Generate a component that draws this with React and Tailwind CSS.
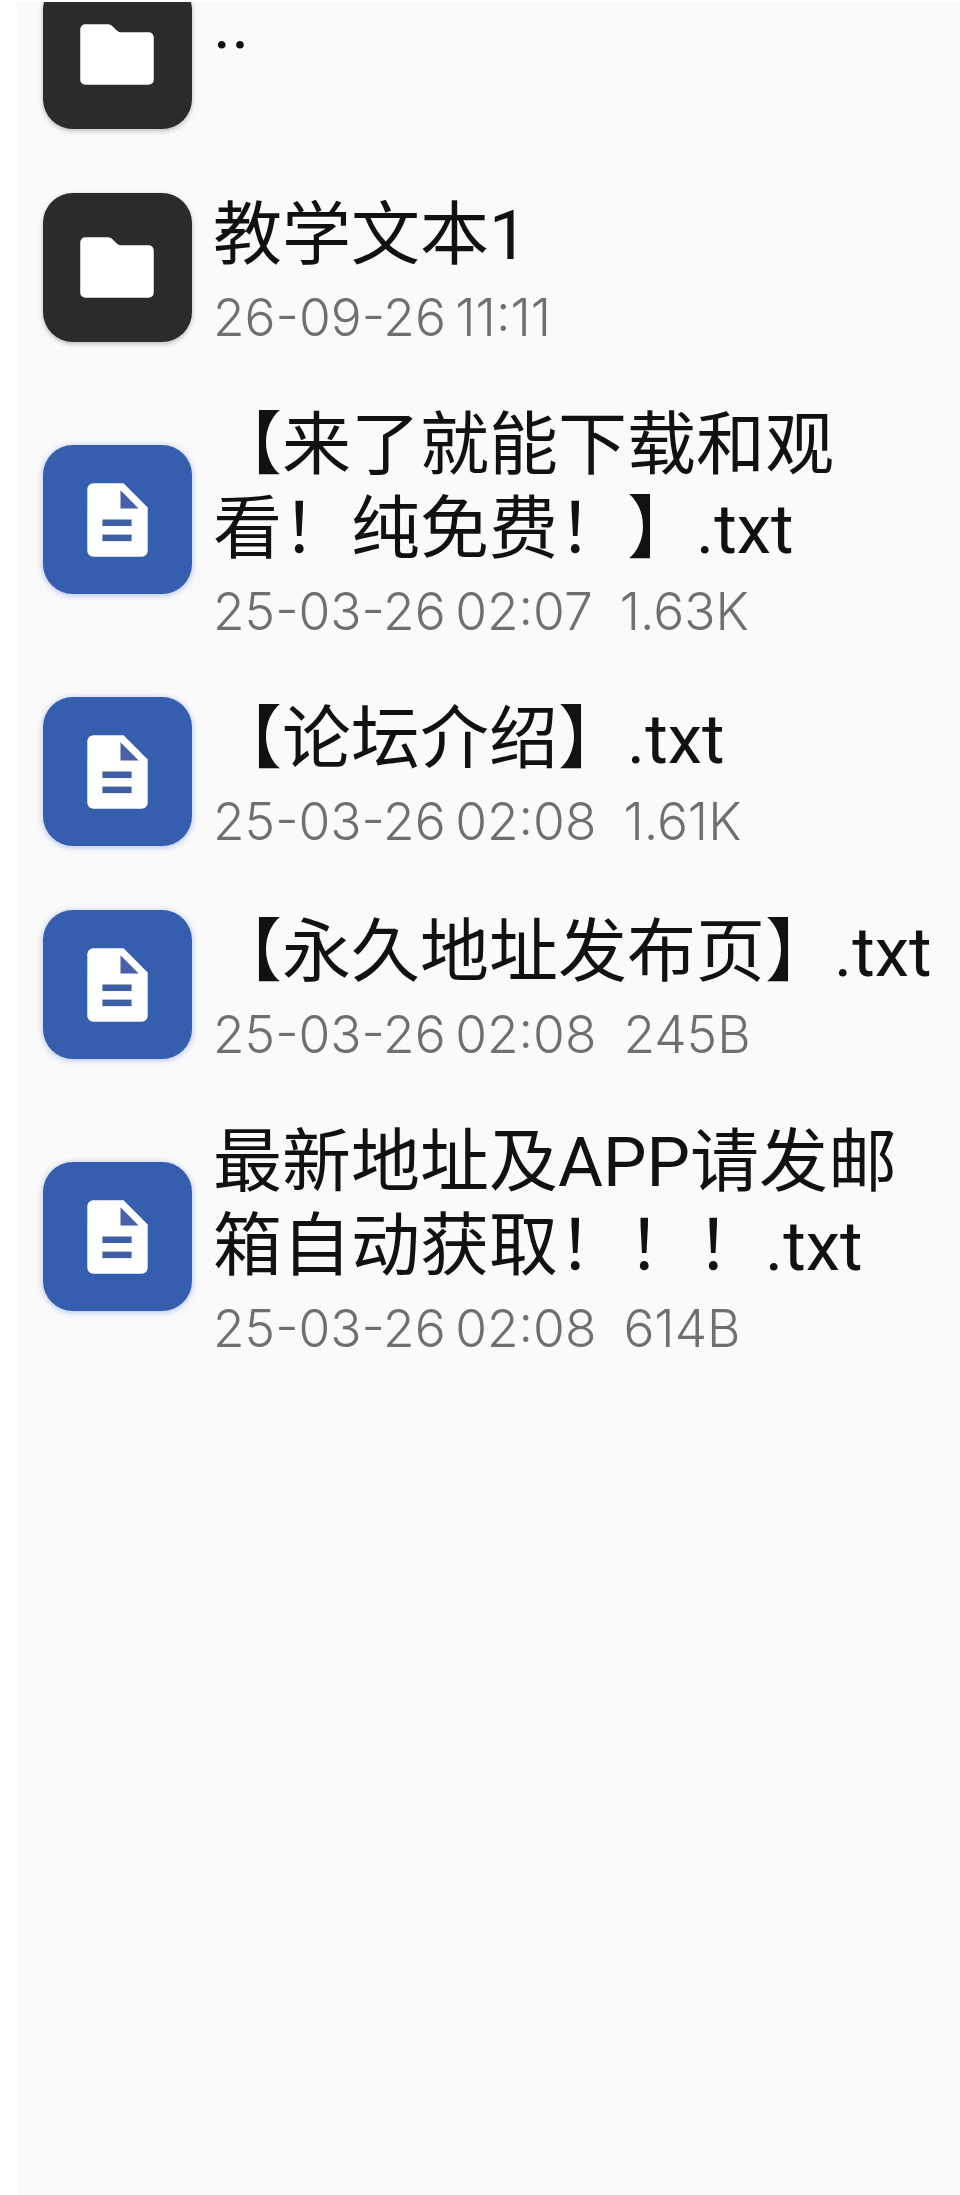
import React from 'react';

const rows = [
  { type: 'folder', name: '..', clip: true },
  { type: 'folder', name: '教学文本1', date: '26-09-26 11:11' },
  { type: 'file', name: '【来了就能下载和观看！纯免费！】.txt', date: '25-03-26 02:07', size: '1.63K', wrap: true },
  { type: 'file', name: '【论坛介绍】.txt', date: '25-03-26 02:08', size: '1.61K' },
  { type: 'file', name: '【永久地址发布页】.txt', date: '25-03-26 02:08', size: '245B' },
  { type: 'file', name: '最新地址及APP请发邮箱自动获取！！！.txt', date: '25-03-26 02:08', size: '614B', wrap: true },
];

function FolderIcon() {
  return (
    <div className="w-[149px] h-[149px] shrink-0 rounded-[30px] bg-[#2b2b2b] shadow-[0_2px_5px_rgba(0,0,0,0.25)]">
      <svg viewBox="0 0 148 148" className="w-full h-full">
        <path
          d="M42 44H65Q67 44 68.500 45.500L73 50Q75 52 77 52H105a5 5 0 0 1 5 5V99a5 5 0 0 1-5 5H42a5 5 0 0 1-5-5V49a5 5 0 0 1 5-5z"
          fill="#ffffff"
        />
      </svg>
    </div>
  );
}

function FileIcon() {
  return (
    <div className="w-[149px] h-[149px] shrink-0 rounded-[30px] bg-[#355fae] shadow-[0_1px_6px_rgba(70,110,220,0.45)]">
      <svg viewBox="0 0 148 148" className="w-full h-full">
        <path d="M50 38H80L104 62V105a6 6 0 0 1-6 6H50a6 6 0 0 1-6-6V44a6 6 0 0 1 6-6z" fill="#ffffff" />
        <path d="M77 45L95 63H77z" fill="#4760a8" />
        <rect x="59" y="74" width="29" height="6.500" fill="#3f5fa3" />
        <rect x="59" y="89" width="29" height="6.500" fill="#3f5fa3" />
      </svg>
    </div>
  );
}

function Row({ row }) {
  return (
    <div className={`flex items-center gap-[21px] pl-[26px] ${row.wrap ? 'py-[24px]' : 'py-[27px]'} ${row.clip ? '-mt-[54px] h-[213px]' : ''}`}>
      {row.type === 'folder' ? <FolderIcon /> : <FileIcon />}
      <div className={`min-w-0 flex-1 ${row.clip ? 'pb-[60px]' : 'pt-[6px]'}`}>
        <div className={`text-[69px] text-[#111111] [font-family:Roboto,'Noto_Sans_CJK_SC',sans-serif] ${row.clip ? 'leading-[40px]' : 'leading-[84px]'}`}>
          {row.name}
        </div>
        {row.date && (
          <div className="mt-[9px] flex gap-[27px] text-[51.5px] leading-[60px] font-light text-[#6f6f6f] [font-family:Inter,sans-serif]">
            <span className="[word-spacing:-5px]">{row.date}</span>
            {row.size && <span>{row.size}</span>}
          </div>
        )}
      </div>
    </div>
  );
}

export default function App() {
  return (
    <div className="h-[2195px] bg-white pl-[17px] pt-[2px] overflow-hidden">
      <div className="h-full bg-[#fafafa] overflow-hidden">
        {rows.map((row) => (
          <Row key={row.name} row={row} />
        ))}
      </div>
    </div>
  );
}
